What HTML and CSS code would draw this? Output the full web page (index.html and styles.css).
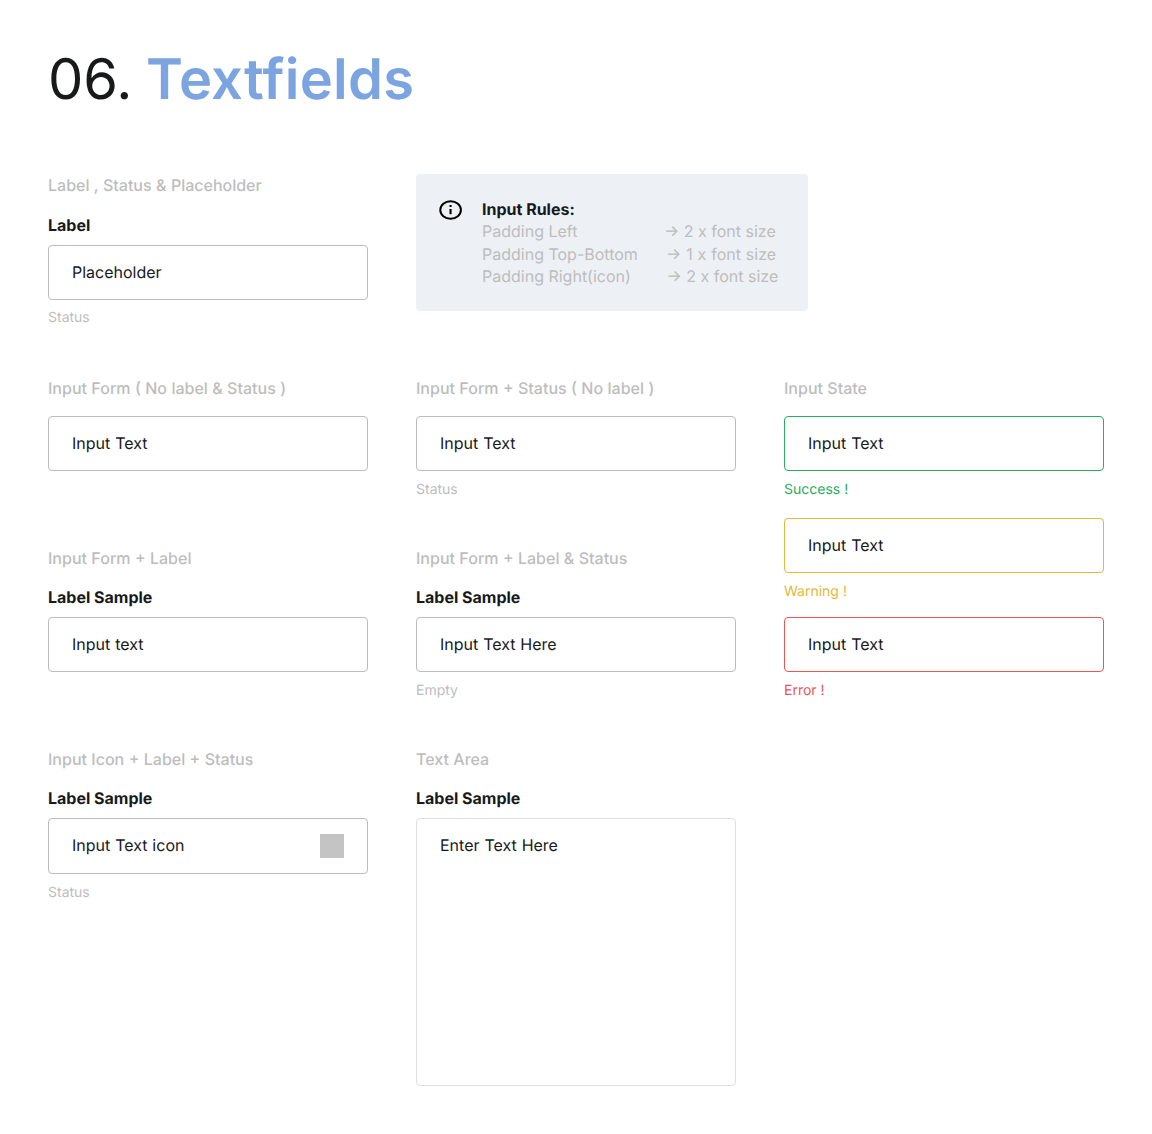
FILE: index.html
```html
<!DOCTYPE html>
<html lang="en">
<head>
<meta charset="utf-8">
<title>Textfields</title>
<link rel="stylesheet" href="styles.css">
</head>
<body>
<main class="page">
  <h1 class="title">06. <span class="title-name">Textfields</span></h1>
  <div class="board">
    <section class="cell cell-intro">
      <h2 class="caption">Label , Status &amp; Placeholder</h2>
      <div class="label">Label</div>
      <div class="field">Placeholder</div>
      <div class="status">Status</div>
    </section>
    <aside class="rules">
      <svg class="rules-icon" width="24" height="20" viewBox="0 0 24 20">
        <ellipse cx="11.6" cy="10" rx="10.3" ry="8.7" fill="none" stroke="#000" stroke-width="2"/>
        <rect x="10.5" y="5" width="2.1" height="2" fill="#000"/>
        <rect x="10.5" y="9" width="2.1" height="5.2" fill="#000"/>
      </svg>
      <div class="rules-body">
        <div class="rules-title">Input Rules:</div>
        <div class="rule"><span>Padding Left</span><span class="rule-value">→ 2 x font size</span></div>
        <div class="rule"><span>Padding Top-Bottom</span><span class="rule-value rule-value-top">→ 1 x font size</span></div>
        <div class="rule"><span>Padding Right(icon)</span><span class="rule-value rule-value-right">→ 2 x font size</span></div>
      </div>
    </aside>

    <section class="cell">
      <h2 class="caption">Input Form ( No label &amp; Status )</h2>
      <div class="field">Input Text</div>
    </section>
    <section class="cell">
      <h2 class="caption">Input Form + Status ( No label )</h2>
      <div class="field">Input Text</div>
      <div class="status">Status</div>
    </section>
    <section class="cell states">
      <h2 class="caption">Input State</h2>
      <div class="state success"><div class="field">Input Text</div><div class="status">Success !</div></div>
      <div class="state warning"><div class="field">Input Text</div><div class="status">Warning !</div></div>
      <div class="state error"><div class="field">Input Text</div><div class="status">Error !</div></div>
    </section>

    <section class="cell">
      <h2 class="caption">Input Form + Label</h2>
      <div class="label">Label Sample</div>
      <div class="field">Input text</div>
    </section>
    <section class="cell">
      <h2 class="caption">Input Form + Label &amp; Status</h2>
      <div class="label">Label Sample</div>
      <div class="field">Input Text Here</div>
      <div class="status">Empty</div>
    </section>

    <section class="cell">
      <h2 class="caption">Input Icon + Label + Status</h2>
      <div class="label">Label Sample</div>
      <div class="field field-icon">Input Text icon<span class="icon"></span></div>
      <div class="status">Status</div>
    </section>
    <section class="cell">
      <h2 class="caption">Text Area</h2>
      <div class="label">Label Sample</div>
      <div class="field field-area">Enter Text Here</div>
    </section>
  </div>
</main>
</body>
</html>
```

FILE: styles.css
```css
* { box-sizing: border-box; }

body {
  margin: 0;
  background: #fff;
  color: #18191a;
  font-family: Inter, "Liberation Sans", sans-serif;
  font-size: 16px;
  line-height: 24px;
  text-rendering: geometricPrecision;
}

.page { padding: 44px 48px 48px; }

.title {
  margin: 0;
  height: 129px;
  font-size: 56px;
  font-weight: 400;
  line-height: 70px;
}
.title-name {
  margin-left: -2px;
  color: #7ca4e0;
  font-weight: 600;
  letter-spacing: 0.25px;
}

.board {
  display: grid;
  grid-template-columns: repeat(3, 320px);
  grid-template-rows: 203px 170px 201px auto;
  column-gap: 48px;
}

.cell { display: flex; flex-direction: column; }

.caption {
  margin: 0 0 16px;
  color: #bdbdbd;
  font-size: 16px;
  font-weight: 500;
  line-height: 24px;
  word-spacing: 0.15px;
}

.label { margin: -1px 0 8px; font-weight: 700; }
.cell-intro .label { margin-top: 0; }

.field {
  height: 55px;
  padding: 14px 23px;
  border: 1px solid #bdbdbd;
  border-radius: 4px;
  word-spacing: 0.4px;
}
.field-icon {
  display: flex;
  justify-content: space-between;
  height: 56px;
}
.icon { width: 24px; height: 24px; margin-top: 1px; background: #c4c4c4; }
.field-area { height: 268px; border-color: #e0e0e0; }

.status {
  margin-top: 9px;
  color: #bdbdbd;
  font-size: 14px;
  line-height: 20px;
}
.cell-intro .status { margin-top: 8px; }

.states { grid-row: 2 / span 2; grid-column: 3; }
.state { height: 102px; }
.warning { height: 99px; }
.success .field { border-color: #27ae60; }
.success .status { color: #27ae60; }
.warning .field { border-color: #e2b93b; }
.warning .status { color: #e2b93b; }
.error .field { border-color: #eb5757; }
.error .status { color: #eb5757; }

.rules {
  grid-column: 2 / span 2;
  display: flex;
  gap: 19px;
  width: 392px;
  height: 137px;
  margin-top: 1px;
  padding: 24px 23px;
  border-radius: 4px;
  background: #edf0f5;
}
.rules-icon { flex: none; margin-top: 2px; }
.rules-body { width: 310px; line-height: 22.4px; }
.rules-title { font-weight: 700; }
.rule {
  display: grid;
  grid-template-columns: 182px auto;
  color: #bdbdbd;
}
.rule-value-top { padding-left: 2px; word-spacing: 0.4px; }
.rule-value-right { padding-left: 2.5px; }
```
